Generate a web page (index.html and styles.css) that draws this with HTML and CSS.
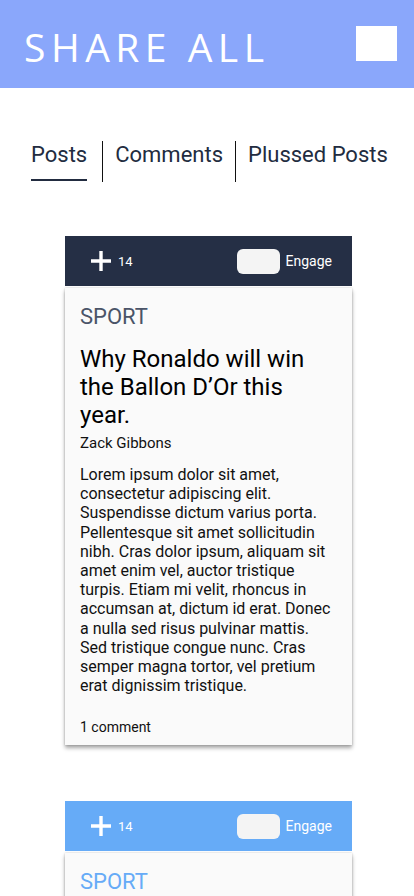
FILE: index.html
```html
<!DOCTYPE html>
<html>
<head>
<meta charset="utf-8">
<link rel="stylesheet" href="styles.css">
</head>
<body>
<header class="topbar">
  <h1 class="brand">SHARE ALL</h1>
  <div class="menu-box"></div>
</header>
<nav class="tabs">
  <div class="tab active">Posts</div>
  <div class="sep sep-1"></div>
  <div class="tab">Comments</div>
  <div class="sep sep-2"></div>
  <div class="tab">Plussed Posts</div>
</nav>
<main class="feed">
  <article class="post">
    <div class="post-bar dark">
      <div class="plus-wrap">
        <svg class="plus" width="20" height="20" viewBox="0 0 20 20"><path d="M10 0v20M0 10h20" stroke="#fff" stroke-width="3.4" fill="none"/></svg>
        <span class="count">14</span>
      </div>
      <div class="engage-wrap">
        <span class="toggle"></span>
        <span class="engage">Engage</span>
      </div>
    </div>
    <div class="post-body">
      <div class="category">SPORT</div>
      <h2 class="title">Why Ronaldo will win the Ballon D’Or this year.</h2>
      <div class="author">Zack Gibbons</div>
      <p class="text">Lorem ipsum dolor sit amet, consectetur adipiscing elit. Suspendisse dictum varius porta. Pellentesque sit amet sollicitudin nibh. Cras dolor ipsum, aliquam sit amet enim vel, auctor tristique turpis. Etiam mi velit, rhoncus in accumsan at, dictum id erat. Donec a nulla sed risus pulvinar mattis. Sed tristique congue nunc. Cras semper magna tortor, vel pretium erat dignissim tristique.</p>
      <div class="comments">1 comment</div>
    </div>
  </article>
  <article class="post">
    <div class="post-bar light">
      <div class="plus-wrap">
        <svg class="plus" width="20" height="20" viewBox="0 0 20 20"><path d="M10 0v20M0 10h20" stroke="#fff" stroke-width="3.4" fill="none"/></svg>
        <span class="count">14</span>
      </div>
      <div class="engage-wrap">
        <span class="toggle"></span>
        <span class="engage">Engage</span>
      </div>
    </div>
    <div class="post-body">
      <div class="category blue">SPORT</div>
    </div>
  </article>
</main>
</body>
</html>
```
FILE: styles.css
```css
* { box-sizing: border-box; }
html, body { margin: 0; padding: 0; }
body {
  font-family: Roboto, "Liberation Sans", sans-serif;
  background: #fff;
  width: 414px;
  height: 896px;
  overflow: hidden;
}
.topbar {
  height: 88px;
  background: #8aa7fb;
  display: flex;
  align-items: flex-start;
  justify-content: space-between;
  padding: 0 17px 0 24px;
}
.brand {
  margin: 0;
  font-family: "Open Sans", sans-serif;
  font-weight: 400;
  font-size: 39px;
  letter-spacing: 5.5px;
  color: #fff;
  line-height: 44px;
  padding-top: 25px;
}
.menu-box {
  width: 41px;
  height: 35px;
  background: #fff;
  margin-top: 26px;
}
.tabs {
  display: flex;
  align-items: stretch;
  margin: 53px 0 0 31px;
  height: 41px;
}
.tab {
  font-size: 22px;
  color: #222c40;
  line-height: 28px;
}
.tab.active {
  position: relative;
}
.tab.active::after {
  content: "";
  position: absolute;
  left: 0;
  right: 0;
  top: 38px;
  height: 2px;
  background: #222c40;
}
.sep {
  width: 1px;
  background: #111;
}
.sep-1 { margin: 0 12px 0 15px; }
.sep-2 { margin: 0 12px 0 12px; }
.feed {
  margin: 54px 0 0 65px;
  width: 287px;
}
.post { margin-bottom: 56px; }
.post-bar {
  height: 50px;
  display: flex;
  align-items: center;
  justify-content: space-between;
  padding: 0 20px 0 26px;
  color: #fff;
  font-size: 13px;
}
.post-bar.dark { background: #252f45; }
.post-bar.light { background: #66abf7; }
.plus-wrap { display: flex; align-items: center; gap: 7px; }
.plus { display: block; }
.count { padding-top: 1px; }
.engage-wrap { display: flex; align-items: center; gap: 6px; }
.engage { font-size: 14px; }
.toggle {
  width: 43px;
  height: 25px;
  border-radius: 6px;
  background: #f4f4f4;
}
.post-body {
  margin-top: 2px;
  background: #fafafa;
  box-shadow: 0 3px 4px rgba(0,0,0,0.35), 0 0 2px rgba(0,0,0,0.2);
  padding: 16px 15px 8px 15px;
}
.category {
  font-size: 22px;
  color: #4a5468;
  line-height: 26px;
}
.category.blue { color: #66abf7; }
.title {
  margin: 15px 0 0;
  font-weight: 400;
  font-size: 24px;
  line-height: 28px;
  color: #000;
}
.author {
  font-size: 15px;
  line-height: 20px;
  margin-top: 4px;
  color: #111;
}
.text {
  margin: 12px 0 0;
  font-size: 16px;
  line-height: 19.2px;
  color: #111;
}
.comments {
  margin-top: 22px;
  font-size: 14px;
  line-height: 20px;
  color: #111;
}
```
